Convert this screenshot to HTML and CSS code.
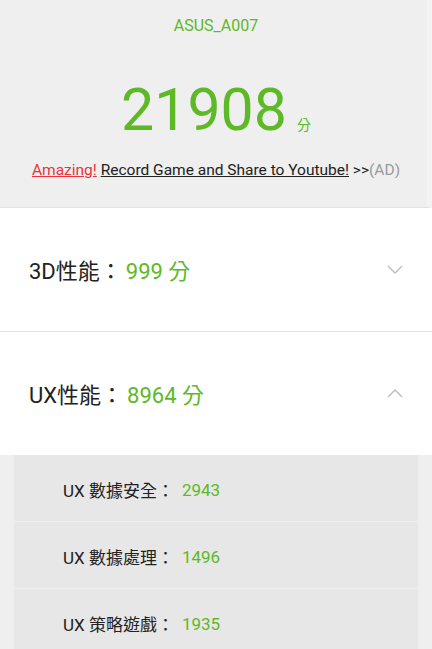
FILE: index.html
```html
<!DOCTYPE html>
<html>
<head>
<meta charset="utf-8">
<link rel="stylesheet" href="styles.css">
</head>
<body>
<div class="page">
  <header class="head">
    <div class="device">ASUS_A007</div>
    <div class="total"><span class="total-num">21908</span><span class="total-unit">分</span></div>
    <div class="ad"><a class="ad-red">Amazing!</a> <a class="ad-link">Record Game and Share to Youtube!</a> &gt;&gt;<span class="ad-tag">(AD)</span></div>
  </header>
  <section class="cat cat-first">
    <div class="cat-label">3D性能：<span class="cat-score">999 分</span></div>
    <svg class="chev" width="16" height="9" viewBox="0 0 16 9"><path d="M1 1 L8 8 L15 1" fill="none" stroke="#bdbdbd" stroke-width="1.4"/></svg>
  </section>
  <section class="cat">
    <div class="cat-label">UX性能：<span class="cat-score">8964 分</span></div>
    <svg class="chev" width="16" height="9" viewBox="0 0 16 9"><path d="M1 8 L8 1 L15 8" fill="none" stroke="#bdbdbd" stroke-width="1.4"/></svg>
  </section>
  <div class="subs">
    <div class="sub"><span class="sub-label">UX 數據安全：</span><span class="sub-score">2943</span></div>
    <div class="sub"><span class="sub-label">UX 數據處理：</span><span class="sub-score">1496</span></div>
    <div class="sub"><span class="sub-label">UX 策略遊戲：</span><span class="sub-score">1935</span></div>
  </div>
</div>
</body>
</html>
```

FILE: styles.css
```css
html, body {
  margin: 0;
  padding: 0;
  background: #efefef;
}
.page {
  width: 432px;
  height: 649px;
  overflow: hidden;
  font-family: Roboto, "Noto Sans CJK TC", sans-serif;
  color: #222;
}
.head {
  height: 208px;
  box-sizing: border-box;
  border-bottom: 1px solid #e2e2e2;
  border-right: 5px solid #f3f3f3;
  background: #efefef;
  display: flex;
  flex-direction: column;
  align-items: center;
  padding-left: 5px;
}
.device {
  margin-top: 16px;
  font-size: 16px;
  line-height: 20px;
  color: #5db925;
}
.total {
  margin-top: 44px;
  display: flex;
  align-items: baseline;
  color: #5db925;
  line-height: 60px;
  height: 60px;
}
.total-num {
  font-size: 59px;
}
.total-unit {
  font-size: 14px;
  margin-left: 10px;
}
.ad {
  margin-top: 20px;
  font-size: 15.5px;
  line-height: 20px;
  color: #222;
  white-space: nowrap;
}
.ad-red {
  color: #e8343a;
  text-decoration: underline;
}
.ad-link {
  color: #222;
  text-decoration: underline;
}
.ad-tag {
  color: #9a9a9a;
}
.cat {
  height: 123px;
  background: #fff;
  display: flex;
  align-items: center;
  justify-content: space-between;
  padding: 0 29px 0 29px;
}
.cat-first {
  border-bottom: 1px solid #e2e2e2;
}
.cat-label {
  font-size: 22px;
  color: #222;
  padding-bottom: 2px;
}
.cat-score {
  color: #5db925;
  margin-left: 4px;
}
.chev {
  display: block;
}
.subs {
  margin: 0 14px;
  background: #e7e7e7;
  display: flex;
  flex-direction: column;
}
.sub {
  height: 67px;
  box-sizing: border-box;
  padding-top: 3px;
  display: flex;
  align-items: center;
  padding-left: 49px;
  font-size: 17px;
  border-bottom: 1px solid #efefef;
}
.sub-label {
  color: #222;
}
.sub-score {
  color: #5db925;
  margin-left: 8px;
}
```
